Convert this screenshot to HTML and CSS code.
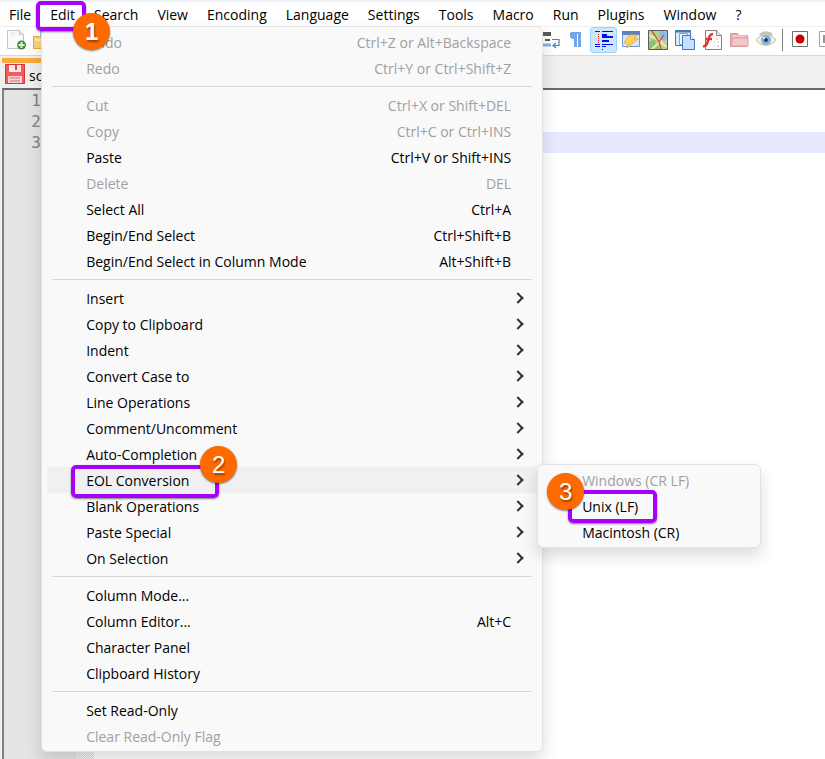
FILE: index.html
```html
<!DOCTYPE html>
<html lang="en">
<head>
    <meta charset="UTF-8">
    <meta name="viewport" content="width=device-width, initial-scale=1.0">
    <title>Notepad++</title>
    <link rel="stylesheet" href="styles.css">
</head>
<body>
    <nav class="menubar">
        <button class="menubar-item">File</button>
        <div class="menu-anchor">
            <button class="menubar-item">Edit</button>

            <!-- Edit menu -->
            <div class="menu menu-edit">
                <button class="menu-item" disabled><span>Undo</span><span>Ctrl+Z or Alt+Backspace</span></button>
                <button class="menu-item" disabled><span>Redo</span><span>Ctrl+Y or Ctrl+Shift+Z</span></button>
                <hr class="menu-line">
                <button class="menu-item" disabled><span>Cut</span><span>Ctrl+X or Shift+DEL</span></button>
                <button class="menu-item" disabled><span>Copy</span><span>Ctrl+C or Ctrl+INS</span></button>
                <button class="menu-item"><span>Paste</span><span>Ctrl+V or Shift+INS</span></button>
                <button class="menu-item" disabled><span>Delete</span><span>DEL</span></button>
                <button class="menu-item"><span>Select All</span><span>Ctrl+A</span></button>
                <button class="menu-item"><span>Begin/End Select</span><span>Ctrl+Shift+B</span></button>
                <button class="menu-item"><span>Begin/End Select in Column Mode</span><span>Alt+Shift+B</span></button>
                <hr class="menu-line">
                <button class="menu-item has-sub"><span>Insert</span></button>
                <button class="menu-item has-sub"><span>Copy to Clipboard</span></button>
                <button class="menu-item has-sub"><span>Indent</span></button>
                <button class="menu-item has-sub"><span>Convert Case to</span></button>
                <button class="menu-item has-sub"><span>Line Operations</span></button>
                <button class="menu-item has-sub"><span>Comment/Uncomment</span></button>
                <button class="menu-item has-sub"><span>Auto-Completion</span></button>
                <div class="menu-anchor">
                    <button class="menu-item has-sub active"><span>EOL Conversion</span></button>
                    <div class="mark mark-eol"></div>
                    <div class="step step-eol">2</div>

                    <!-- EOL submenu -->
                    <div class="menu menu-eol">
                        <button class="menu-item" disabled><span>Windows (CR LF)</span></button>
                        <div class="menu-anchor">
                            <button class="menu-item"><span>Unix (LF)</span></button>
                            <div class="mark mark-unix"></div>
                            <div class="step step-unix">3</div>
                        </div>
                        <button class="menu-item"><span>Macintosh (CR)</span></button>
                    </div>
                </div>
                <button class="menu-item has-sub"><span>Blank Operations</span></button>
                <button class="menu-item has-sub"><span>Paste Special</span></button>
                <button class="menu-item has-sub"><span>On Selection</span></button>
                <hr class="menu-line">
                <button class="menu-item"><span>Column Mode...</span></button>
                <button class="menu-item"><span>Column Editor...</span><span>Alt+C</span></button>
                <button class="menu-item"><span>Character Panel</span></button>
                <button class="menu-item"><span>Clipboard History</span></button>
                <hr class="menu-line">
                <button class="menu-item"><span>Set Read-Only</span></button>
                <button class="menu-item" disabled><span>Clear Read-Only Flag</span></button>
            </div>

            <div class="mark mark-edit"></div>
            <div class="step step-edit">1</div>
        </div>
        <button class="menubar-item">Search</button>
        <button class="menubar-item">View</button>
        <button class="menubar-item">Encoding</button>
        <button class="menubar-item">Language</button>
        <button class="menubar-item">Settings</button>
        <button class="menubar-item">Tools</button>
        <button class="menubar-item">Macro</button>
        <button class="menubar-item">Run</button>
        <button class="menubar-item">Plugins</button>
        <button class="menubar-item">Window</button>
        <button class="menubar-item">?</button>
    </nav>

    <div class="toolbar">
        <div class="tools tools-file">
            <button class="tool" aria-label="New">
                <svg width="20" height="20" viewBox="0 0 20 20">
                    <path d="M1.500 .5h12l4 4v14h-16z" fill="#fafafa" stroke="#c4c4c4"/>
                    <path d="M13.500 .5v4h4" fill="#e4e4e4" stroke="#c4c4c4"/>
                    <path d="M4 3h6M4 5h4" stroke="#e4e4e4"/>
                    <circle cx="15.500" cy="15" r="4.500" fill="#4b8a35"/>
                    <path d="M15.500 12v6M12.500 15h6" stroke="#d8f0c8" stroke-width="2"/>
                </svg>
            </button>
            <button class="tool" aria-label="Open">
                <svg width="20" height="20" viewBox="0 0 20 20">
                    <path d="M7 1h9v8h-9z" fill="#8fc0f0"/>
                    <path d="M.5 6.500h6l2 2h10v10h-18z" fill="#fbd578" stroke="#e8a63c"/>
                    <path d="M2 10h16" stroke="#fdebb8" stroke-width="2"/>
                </svg>
            </button>
        </div>
        <div class="tools">
            <button class="tool" aria-label="Word wrap">
                <svg width="20" height="20" viewBox="0 0 20 20">
                    <path d="M0 3h11M0 5h11" stroke="#222" stroke-width="1.500"/>
                    <path d="M0 10h3M5 10h5" stroke="#222" stroke-width="1.500"/>
                    <path d="M0 15h11" stroke="#86aee6" stroke-width="3"/>
                    <path d="M12 9.500h7v6h-5M16 13l-3 2.500 3 2.500" fill="none" stroke="#5578b8" stroke-width="1.200"/>
                </svg>
            </button>
            <button class="tool" aria-label="Show all characters">
                <svg width="20" height="20" viewBox="0 0 20 20">
                    <path d="M4 2h10v15h-3V4h-1v13H7V9H5L3 7V3z" fill="#74a6e8"/>
                </svg>
            </button>
            <button class="tool pressed" aria-label="Indent guide">
                <svg width="20" height="20" viewBox="0 0 20 20">
                    <path d="M1 1.500h5M8 1.500h11M1 14.500h5M1 16.500h5M8 14.500h11M8 16.500h4M8 19.500h1" stroke="#0010e8"/>
                    <path d="M8 5h5M8 7h11M8 11h7" stroke="#0010e8" stroke-width="2"/>
                    <path d="M4.500 4v9" stroke="#e02020" stroke-dasharray="1 1"/>
                </svg>
            </button>
            <button class="tool" aria-label="Define language">
                <svg width="20" height="20" viewBox="0 0 20 20">
                    <path d="M1.500 1.500h17v15h-17z" fill="#dfe5f0" stroke="#6f95cc"/>
                    <path d="M1 1h18v4H1z" fill="#5683c8"/>
                    <path d="M8 5h8l-3 4h4L6 18l1-5H3z" fill="#ffd45c" stroke="#e3ac48"/>
                </svg>
            </button>
            <button class="tool" aria-label="Document map">
                <svg width="20" height="20" viewBox="0 0 20 20">
                    <path d="M.5 .5h19v19H.5z" fill="#b4d788"/>
                    <path d="M11 1h8v8l-4 2-4-4z" fill="#8fbbe6"/>
                    <path d="M1 12l5-3 6 10H1z" fill="#86c474"/>
                    <path d="M1 5l6 3 12 9M14 10L4 19" fill="none" stroke="#f7e6ac" stroke-width="2"/>
                    <path d="M4 1l7 11 2 7M11 12l5-7" fill="none" stroke="#d75a50" stroke-width="1.500"/>
                    <path d="M.5 .5h19v19H.5z" fill="none" stroke="#5a5c60"/>
                </svg>
            </button>
            <button class="tool" aria-label="Document list">
                <svg width="20" height="20" viewBox="0 0 20 20">
                    <path d="M.5 .5h15v15H.5z" fill="#dbe9fa" stroke="#4b78bc"/>
                    <path d="M0 1h16" stroke="#4b78bc" stroke-width="3"/>
                    <path d="M4.500 3.500h8v11h-8z" fill="#f5faff" stroke="#78a5df"/>
                    <path d="M7.500 5.500h8l4 4v10h-12z" fill="#c6e0fb" stroke="#3e78c8"/>
                    <path d="M15.500 5.500v4h4" fill="#fff" stroke="#3e78c8"/>
                </svg>
            </button>
            <button class="tool" aria-label="Function list">
                <svg width="20" height="20" viewBox="0 0 20 20">
                    <path d="M3.500 .5h11l5 5v14h-16z" fill="#fcfcfa" stroke="#84807c"/>
                    <path d="M14.500 .5v5h5" fill="#e8e8e4" stroke="#84807c"/>
                    <path d="M11 4C7 4 7 8 6 11s-2 6-5 5M4 9h6" fill="none" stroke="#dc3838" stroke-width="2.500"/>
                    <path d="M14 9h2M12 12h1M16 12h1M12 16h1M15 16h2" stroke="#bcbcb8"/>
                </svg>
            </button>
            <button class="tool" aria-label="Folder as workspace">
                <svg width="20" height="20" viewBox="0 0 20 20">
                    <path d="M1.500 3.500h7l2 2h8v11h-17z" fill="#eca9ac" stroke="#d9989b"/>
                    <path d="M2 16l2-8h15v8z" fill="#f3c6c8" stroke="#dea0a3"/>
                    <path d="M3 6h14" stroke="#fbe5e6"/>
                </svg>
            </button>
            <button class="tool" aria-label="Monitoring">
                <svg width="20" height="20" viewBox="0 0 20 20">
                    <path d="M4 5c3-3 9-3 12 0" fill="none" stroke="#c4c2c0" stroke-width="3"/>
                    <path d="M0 10c5-7 15-7 20 0-5 7-15 7-20 0z" fill="#f5f2ea" stroke="#c9b794"/>
                    <circle cx="10" cy="10" r="5" fill="#84b0dc"/>
                    <circle cx="10" cy="10" r="2" fill="#203f68"/>
                    <circle cx="8" cy="8" r="1" fill="#fff"/>
                </svg>
            </button>
            <span class="tool-line"></span>
            <button class="tool" aria-label="Start recording">
                <svg width="20" height="20" viewBox="0 0 20 20">
                    <path d="M2.500 1.500h15v15h-15z" fill="#fff" stroke="#707070"/>
                    <circle cx="10" cy="9" r="4.500" fill="#c80000"/>
                </svg>
            </button>
            <button class="tool" aria-label="Stop recording">
                <svg width="20" height="20" viewBox="0 0 20 20">
                    <path d="M2.500 1.500h15v15h-15z" fill="#fff" stroke="#a0a0a0"/>
                    <path d="M6 5h8v8H6z" fill="#989898"/>
                </svg>
            </button>
        </div>
    </div>

    <div class="tabbar">
        <button class="tab">
            <svg width="20" height="20" viewBox="0 0 20 20">
                <path d="M.5 .5h19v19H.5z" fill="#f25a5b" stroke="#d83436"/>
                <path d="M4 1h12v7H4z" fill="#fbe9e9"/>
                <path d="M10 1h2v5h-2z" fill="#d84a4c"/>
                <path d="M3 12h14v7H3z" fill="#f8d6d6"/>
                <path d="M5 14h10M5 17h10" stroke="#d86a6c"/>
            </svg>
            <span>script.sh</span>
        </button>
    </div>

    <main class="editor">
        <div class="gutter">
            <div>1</div>
            <div>2</div>
            <div>3</div>
        </div>
        <div class="fold"></div>
        <div class="code">
            <div class="code-line"></div>
            <div class="code-line"></div>
            <div class="code-line current"></div>
        </div>
    </main>
</body>
</html>
```
FILE: styles.css
```css
* {
    box-sizing: border-box;
    margin: 0;
    padding: 0;
}

html, body {
    height: 100%;
}

body {
    font-family: "Open Sans", "Noto Sans", sans-serif;
    font-size: 14px;
    color: #000;
    background-color: #f0f0f0;
    display: flex;
    flex-direction: column;
    overflow: hidden;
}

button {
    font: inherit;
    color: inherit;
    border: none;
    background: none;
}

/* Menu bar */
.menubar {
    display: flex;
    height: 26px;
    background-color: #fff;
    border-top: 2px solid #f0f4f9;
}

.menubar-item {
    padding: 0 10px 0 9px;
    line-height: 25px;
}

.menu-anchor {
    position: relative;
}

/* Toolbar */
.toolbar {
    display: flex;
    flex: none;
    height: 30px;
    background-color: #fff;
    border-top: 1px solid #f0f0f0;
    border-bottom: 1px solid #d8d8d8;
    overflow: hidden;
}

.tools {
    display: flex;
    flex: none;
    align-items: flex-start;
}

.tools-file {
    width: 536px;
    padding-left: 2px;
}

.tool {
    display: flex;
    flex: none;
    align-items: center;
    justify-content: center;
    width: 27px;
    height: 26px;
}

.pressed {
    background-color: #cce8ff;
    border: 1px solid #99d1ff;
    border-radius: 3px;
}

.tool-line {
    width: 1px;
    height: 22px;
    margin: 2px 3px;
    background-color: #808080;
}

/* Tabs */
.tabbar {
    display: flex;
    flex: none;
    height: 32px;
    padding: 2px 2px 0;
}

.tab {
    display: flex;
    align-items: flex-start;
    gap: 4px;
    padding: 1px 12px 0 3px;
    border-top: 5px solid #faaa3c;
    line-height: 24px;
}

/* Editor */
.editor {
    display: flex;
    flex: 1;
    margin-left: 2px;
    background-color: #fff;
    border-top: 2px solid #696969;
    border-left: 2px solid #808080;
    line-height: 21px;
}

.gutter {
    width: 72px;
    padding-right: 35px;
    background-color: #e4e4e4;
    color: #808080;
    font-family: "DejaVu Sans Mono", monospace;
    font-size: 16px;
    text-align: right;
}

.fold {
    width: 18px;
    background: repeating-conic-gradient(#e0e0e0 0 25%, #f8f8f8 0 50%) 0 0 / 2px 2px;
}

.code {
    flex: 1;
}

.code-line {
    height: 21px;
}

.current {
    background-color: #e8e8ff;
}

/* Popup menus */
.menu {
    position: absolute;
    z-index: 10;
    padding: 2px 5px;
    background-color: #f9f9f9;
    border: 1px solid #e2e2e2;
    border-radius: 6px;
    box-shadow: 0 8px 16px rgba(0, 0, 0, 0.14);
}

.menu-edit {
    top: 24px;
    left: 0;
    width: 502px;
}

.menu-eol {
    top: -3px;
    left: 100%;
    width: 224px;
}

.menu-item {
    display: flex;
    justify-content: space-between;
    align-items: center;
    width: 100%;
    height: 26px;
    padding: 0 26px 0 39px;
    border-radius: 4px;
    text-align: left;
    white-space: nowrap;
}

.menu-item:disabled {
    color: #a0a0a0;
}

.active {
    background-color: #f0f0f0;
}

.has-sub {
    padding-right: 15px;
}

.has-sub::after {
    content: "";
    width: 6px;
    height: 6px;
    border-top: 2px solid #333;
    border-right: 2px solid #333;
    transform: rotate(45deg);
}

.menu-line {
    height: 1px;
    margin: 5px;
    border: none;
    background-color: #d7d7d7;
}

/* Numbered steps */
.mark {
    position: absolute;
    z-index: 11;
    border: 4px solid #a800ff;
    border-radius: 5px;
    box-shadow: 0 1px 2px rgba(0, 0, 0, 0.5);
    pointer-events: none;
}

.step {
    position: absolute;
    z-index: 12;
    width: 37px;
    height: 37px;
    border-radius: 50%;
    background-color: #ff6a00;
    box-shadow: 0 1px 2px rgba(0, 0, 0, 0.5);
    color: #fff;
    font-family: "Liberation Sans", Arial, sans-serif;
    font-size: 24px;
    line-height: 37px;
    text-align: center;
    text-shadow: 1px 2px 2px rgba(0, 0, 0, 0.4);
}

.mark-edit {
    top: -1px;
    left: -5px;
    width: 50px;
    height: 30px;
}

.step-edit {
    top: 11px;
    left: 32px;
    font-weight: bold;
}

.mark-eol {
    top: -2px;
    left: 24px;
    width: 148px;
    height: 33px;
}

.step-eol {
    top: -21px;
    left: 153px;
}

.mark-unix {
    top: -3px;
    left: 25px;
    width: 89px;
    height: 33px;
}

.step-unix {
    top: -20px;
    left: 4px;
}
```
